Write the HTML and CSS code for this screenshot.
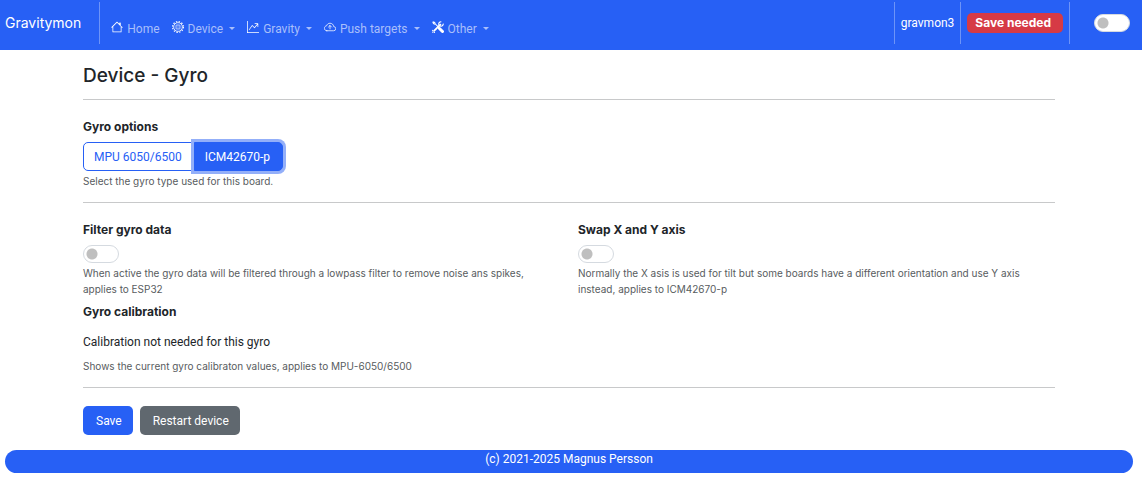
FILE: index.html
```html
<!DOCTYPE html>
<html lang="en">
<head>
<meta charset="utf-8">
<meta name="viewport" content="width=device-width, initial-scale=1">
<title>Gravitymon</title>
<link rel="stylesheet" href="styles.css">
</head>
<body>
<header class="navbar">
  <a class="brand" href="#">Gravitymon</a>
  <nav class="menu">
    <a class="menu-link" href="#"><svg class="icon" viewBox="0 0 16 16" fill="currentColor" aria-hidden="true"><path d="M8.354 1.146a.5.5 0 0 0-.708 0l-7 7a.5.5 0 0 0 .708.708L2 8.207V14.5a.5.5 0 0 0 .5.5h11a.5.5 0 0 0 .5-.5V8.207l.646.647a.5.5 0 0 0 .708-.708L13 6.293V2.5a.5.5 0 0 0-.5-.5h-1a.5.5 0 0 0-.5.5v1.293zM3 14V7.207l5-5 5 5V14z"/></svg>Home</a>
    <button class="menu-link has-menu" type="button"><svg class="icon" viewBox="0 0 16 16" fill="none" stroke="currentColor" aria-hidden="true"><circle cx="8" cy="8" r="5.8" stroke-width="1.1"/><circle cx="8" cy="8" r="7.2" stroke-width="1.6" stroke-dasharray="1.9 1.87"/><rect x="5.4" y="5.4" width="5.2" height="5.2" rx=".5" stroke-width="1"/><path d="M7.2 8h1.6"/></svg>Device</button>
    <button class="menu-link has-menu" type="button"><svg class="icon" viewBox="0 0 16 16" fill="currentColor" aria-hidden="true"><path fill-rule="evenodd" d="M0 0h1v15h15v1H0zm10 3.500a.5.5 0 0 1 .5-.5h4a.5.5 0 0 1 .5.5v4a.5.5 0 0 1-1 0V4.900l-3.613 4.417a.5.5 0 0 1-.74.037L7.060 6.767l-3.656 5.027a.5.5 0 0 1-.808-.588l4-5.500a.5.5 0 0 1 .758-.06l2.609 2.610L13.445 4H10.500a.5.5 0 0 1-.5-.5"/></svg>Gravity</button>
    <button class="menu-link has-menu" type="button"><svg class="icon" viewBox="0 0 16 16" fill="none" stroke="currentColor" stroke-linecap="round" stroke-linejoin="round" aria-hidden="true"><path d="M3.800 13h8.900a2.800 2.800 0 0 0 .2-5.600C12.700 4.700 10.600 3 8 3 5.800 3 4 4.400 3.500 6.300 1.800 6.600.5 8 .5 9.800.5 11.600 2 13 3.800 13zM8 10.500v-4.500M6 8l2-2 2 2"/></svg>Push targets</button>
    <button class="menu-link has-menu" type="button"><svg class="icon" viewBox="0 0 16 16" fill="none" stroke="currentColor" aria-hidden="true"><path d="M1 1l2.500 1 1 2L10 9.500M1 1l1 2.500 2 1" stroke-width="1.400"/><path d="M10 10l4 4" stroke-width="4" stroke-linecap="round"/><path d="M2.700 13.300l8.500-8.500" stroke-width="2.400" stroke-linecap="round"/><path d="M14.900 3.600a3 3 0 1 1-2.500-2.500M1.100 12.500a2 2 0 1 0 2.400 2.400" stroke-width="1.500"/></svg>Other</button>
  </nav>
  <div class="status">
    <span class="status-item">gravmon3</span>
    <span class="status-item"><span class="badge">Save needed</span></span>
    <span class="status-item theme"><input class="switch" type="checkbox" role="switch" aria-label="Dark mode"></span>
  </div>
</header>
<main class="container">
  <h1 class="title">Device - Gyro</h1>
  <hr class="rule">
  <section class="field">
    <h2 class="label">Gyro options</h2>
    <div class="button-group" role="group" aria-label="Gyro options">
      <button class="option" type="button">MPU 6050/6500</button>
      <button class="option selected" type="button" aria-pressed="true">ICM42670-p</button>
    </div>
    <p class="help">Select the gyro type used for this board.</p>
  </section>
  <hr class="rule">
  <div class="columns">
    <div class="field">
      <label class="label" for="filter">Filter gyro data</label>
      <input class="switch" id="filter" type="checkbox" role="switch">
      <p class="help">When active the gyro data will be filtered through a lowpass filter to remove noise ans spikes, applies to ESP32</p>
    </div>
    <div class="field">
      <label class="label" for="swap">Swap X and Y axis</label>
      <input class="switch" id="swap" type="checkbox" role="switch">
      <p class="help">Normally the X asis is used for tilt but some boards have a different orientation and use Y axis instead, applies to ICM42670-p</p>
    </div>
  </div>
  <section class="field calibration">
    <h2 class="label">Gyro calibration</h2>
    <p class="value">Calibration not needed for this gyro</p>
    <p class="help">Shows the current gyro calibraton values, applies to MPU-6050/6500</p>
  </section>
  <hr class="rule">
  <div class="actions">
    <button class="button primary" type="button">Save</button>
    <button class="button secondary" type="button">Restart device</button>
  </div>
</main>
<footer class="footer">(c) 2021-2025 Magnus Persson</footer>
</body>
</html>
```
FILE: styles.css
```css
* { box-sizing: border-box; }
body {
  margin: 0;
  background: #fff;
  color: #212529;
  font: 12px/18px Roboto, "Liberation Sans", sans-serif;
}
h1, h2, p { margin: 0; }
button { font: inherit; }

.navbar {
  display: flex;
  min-height: 50px;
  padding: 2px 12px 6px 5px;
  background: #2760f5;
  color: #fff;
}
.brand {
  display: flex;
  align-items: center;
  padding-right: 18px;
  border-right: 1px solid #6d94f8;
  color: #fff;
  font-family: Inter, sans-serif;
  font-size: 14px;
  text-decoration: none;
}
.menu { display: flex; align-items: center; gap: 12px; padding: 11px 0 0 11px; }
.menu-link {
  display: flex;
  align-items: center;
  gap: 4px;
  padding: 0;
  border: 0;
  background: none;
  color: #a9bffb;
  text-decoration: none;
  white-space: nowrap;
}
.has-menu::after {
  content: "";
  margin-left: 2px;
  border: 3px solid transparent;
  border-top-color: currentColor;
  border-bottom: 0;
}
.icon { width: 12px; height: 12px; margin-bottom: 3px; color: #fff; }
.status { display: flex; margin-left: auto; }
.status-item {
  display: flex;
  align-items: center;
  padding: 0 6px;
  border-left: 1px solid #6d94f8;
}
.badge {
  padding: 1px 12px 1px 8px;
  border-radius: 5px;
  background: #d63a45;
  font-family: Inter, sans-serif;
  font-size: 12px;
  font-weight: 700;
}
.status-item.theme { padding: 0 0 0 24px; }

.switch {
  appearance: none;
  display: block;
  width: 36px;
  height: 18px;
  margin: 0;
  border: 1px solid #d5dae0;
  border-radius: 9px;
  background: #fff radial-gradient(circle at 8px 8px, #bfbfbf 5px, transparent 6px);
}

.container {
  width: calc(100% - 4px);
  max-width: 1008px;
  padding: 16px 18px 15px;
  margin: 0 4px 0 calc((100% - 1012px) / 2);
}
.title {
  font-family: Inter, sans-serif;
  font-size: 19px;
  line-height: 20px;
  font-weight: 500;
}
.rule { height: 1px; margin: 13px 0 18px; border: 0; background: #c8c9ca; }
.label {
  display: block;
  margin-bottom: 6px;
  font-family: Inter, sans-serif;
  font-size: 12px;
  line-height: 18px;
  font-weight: 700;
}
.help { color: #585c60; font-family: Inter, sans-serif; font-size: 10px; line-height: 16px; }
.button-group { display: flex; margin-bottom: 2px; }
.option {
  padding: 6px 12px 4px 10px;
  border: 1px solid #2760f5;
  border-radius: 5px 0 0 5px;
  background: #fff;
  color: #2760f5;
  line-height: 17px;
}
.option.selected {
  margin-left: -1px;
  border-radius: 0 5px 5px 0;
  background: #2760f5;
  color: #fff;
  box-shadow: 0 0 0 3px #93aff9;
}
.columns { display: grid; grid-template-columns: 1fr 1fr; gap: 18px; }
.columns .switch { margin-bottom: 2px; }
.calibration { margin-top: 6px; }
.value { margin: 12px 0 7px; }
.actions { display: flex; gap: 7px; }
.button {
  padding: 7px 11px 5px 13px;
  border: 0;
  border-radius: 5px;
  color: #fff;
  line-height: 17px;
}
.primary { background: #2760f5; }
.secondary { background: #60686f; }
.footer {
  min-height: 23px;
  margin: 0 9px 0 5px;
  padding-bottom: 5px;
  border-radius: 12px;
  background: #2760f5;
  color: #fff;
  text-align: center;
}
```
